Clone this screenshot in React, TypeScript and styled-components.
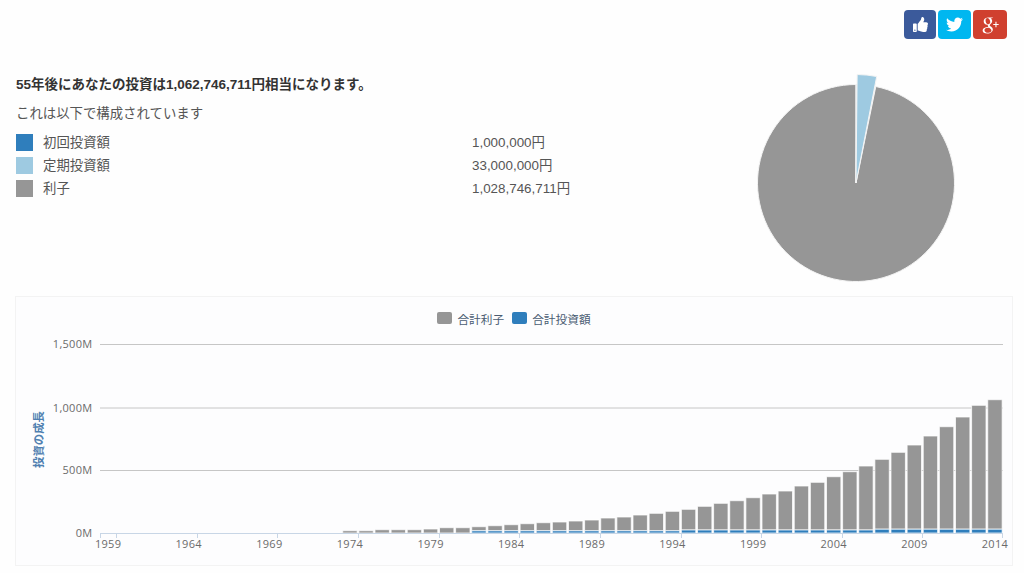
import React from "react";
import styled, { createGlobalStyle } from "styled-components";
import { FaThumbsUp, FaTwitter } from "react-icons/fa";
import { TiSocialGooglePlus } from "react-icons/ti";

const GlobalStyle = createGlobalStyle`
  html, body { margin: 0; padding: 0; background: #fefefe; }
  body { font-family: "Liberation Sans", "Noto Sans CJK JP", sans-serif; color: #555; }
`;

const Page = styled.div`
  width: 1024px;
  height: 573px;
  overflow: hidden;
  box-sizing: border-box;
  padding: 10px 17px 0 15px;
  display: flex;
  flex-direction: column;
`;
const Toolbar = styled.div`
  display: flex;
  justify-content: flex-end;
  gap: 2px;
  height: 29px;
`;
const ShareButton = styled.button<{ $bg: string; $w: number }>`
  width: ${(p) => p.$w}px;
  height: 29px;
  border: 0;
  padding: 0;
  border-radius: 4px;
  background: ${(p) => p.$bg};
  color: #fff;
  display: flex;
  align-items: center;
  justify-content: center;
`;
const Summary = styled.section`
  margin-top: 35px;
  height: 210px;
  display: flex;
  justify-content: space-between;
  padding: 0 51px 0 1px;
`;
const Details = styled.div`
  width: 560px;
  font-size: 13.4px;
`;
const Headline = styled.div`
  font-weight: 700;
  font-size: 13.5px;
  color: #333;
  line-height: 20px;
  padding-top: 1px;
`;
const Subhead = styled.div`
  margin-top: 9px;
  margin-bottom: 7px;
  line-height: 20px;
`;
const BreakdownRow = styled.div`
  display: grid;
  grid-template-columns: 27px 429px 1fr;
  align-items: center;
  height: 23px;
`;
const Swatch = styled.span<{ $c: string }>`
  width: 17px;
  height: 17px;
  background: ${(p) => p.$c};
`;
const RowText = styled.span`
  padding-bottom: 3px;
`;
const ChartCard = styled.section`
  margin-top: 12px;
  width: 998px;
  height: 270px;
  box-sizing: border-box;
  border: 1px solid #f3f3f3;
  background: #fdfdfe;
  display: flex;
  flex-direction: column;
`;
const ChartLegend = styled.div`
  height: 37px;
  padding-top: 14px;
  box-sizing: border-box;
  display: flex;
  justify-content: center;
  font-size: 11.7px;
  color: #4a5c72;
`;
const LegendItem = styled.div`
  display: flex;
  align-items: center;
  gap: 5px;
  height: 14px;
  margin: 0 4px;
`;
const LegendKey = styled.span<{ $c: string }>`
  width: 15px;
  height: 12px;
  border-radius: 2px;
  background: ${(p) => p.$c};
`;
const PlotSvg = styled.svg`
  display: block;
  width: 996px;
  height: 231px;
`;
const AxisText = styled.text`
  font-family: "Open Sans", sans-serif;
  font-size: 11px;
  letter-spacing: 0.3px;
  fill: #6b6b6b;
`;
const AxisTitle = styled.text`
  font-family: "Liberation Sans", "Noto Sans CJK JP", sans-serif;
  font-size: 11.4px;
  font-weight: 700;
  fill: #4f7fb0;
`;

const breakdown = [
  { c: "#2f7ebc", label: "初回投資額", value: "1,000,000円" },
  { c: "#9ecae1", label: "定期投資額", value: "33,000,000円" },
  { c: "#969696", label: "利子", value: "1,028,746,711円" },
];

const tops: Record<number, number> = {
  1974: 530.7, 1975: 530.7, 1976: 529.7, 1977: 529.7, 1978: 529.7, 1979: 529, 1980: 527.7, 1981: 527.7,
  1982: 526.7, 1983: 525.7, 1984: 524.7, 1985: 523.7, 1986: 522.7, 1987: 522, 1988: 521, 1989: 520,
  1990: 518, 1991: 517, 1992: 515, 1993: 513.3, 1994: 511.3, 1995: 509.3, 1996: 506.3, 1997: 503.3,
  1998: 500.7, 1999: 497.7, 2000: 494, 2001: 491, 2002: 486, 2003: 482.3, 2004: 476.7, 2005: 471.7,
  2006: 466, 2007: 459.3, 2008: 452.3, 2009: 445, 2010: 436, 2011: 426.7, 2012: 417, 2013: 405.3, 2014: 399.7,
};
const STEP = 903 / 56;
const BASE = 533;
const blueHeight = (y: number) => (y < 1982 ? 0 : y < 1995 ? 2.2 : y < 2007 ? 3 : 3.8);

const grid = [
  { y: 344.5, label: "1,500M" },
  { y: 408, label: "1,000M" },
  { y: 470.5, label: "500M" },
];
const labelYears = Array.from({ length: 12 }, (_, i) => 1959 + i * 5);

function polar(r: number, deg: number): [number, number] {
  const a = (deg * Math.PI) / 180;
  return [100 + r * Math.sin(a), 109 - r * Math.cos(a)];
}
function wedge(r: number, a: number, b: number) {
  const [x1, y1] = polar(r, a);
  const [x2, y2] = polar(r, b);
  return `M100 109L${x1} ${y1}A${r} ${r} 0 ${b - a > 180 ? 1 : 0} 1 ${x2} ${y2}Z`;
}

export default function App() {
  return (
    <Page>
      <GlobalStyle />
      <Toolbar>
        <ShareButton $bg="#3b5a9b" $w={32}><FaThumbsUp size={15} /></ShareButton>
        <ShareButton $bg="#00b7f0" $w={33}><FaTwitter size={17} /></ShareButton>
        <ShareButton $bg="#d0402f" $w={34}><TiSocialGooglePlus size={26} /></ShareButton>
      </Toolbar>
      <Summary>
        <Details>
          <Headline>55年後にあなたの投資は1,062,746,711円相当になります。</Headline>
          <Subhead>これは以下で構成されています</Subhead>
          {breakdown.map((b) => (
            <BreakdownRow key={b.label}>
              <Swatch $c={b.c} />
              <RowText>{b.label}</RowText>
              <RowText>{b.value}</RowText>
            </BreakdownRow>
          ))}
        </Details>
        <svg width="200" height="210" viewBox="0 0 200 210" aria-label="pie">
          <path d={wedge(98.5, 11.6, 360)} fill="#969696" stroke="#f4f4f4" strokeWidth="1" />
          <path d={wedge(98.5, 0, 0.4)} fill="#2f7ebc" stroke="#f4f4f4" strokeWidth="1" />
          <path d={wedge(108.5, 0.6, 11)} fill="#9ecae1" stroke="#f4f4f4" strokeWidth="1" />
        </svg>
      </Summary>
      <ChartCard>
        <ChartLegend>
          <LegendItem><LegendKey $c="#969696" />合計利子</LegendItem>
          <LegendItem><LegendKey $c="#2f7ebc" />合計投資額</LegendItem>
        </ChartLegend>
        <PlotSvg viewBox="16 334 996 231">
          {grid.map((g) => (
            <g key={g.label}>
              <line x1="100" x2="1003" y1={g.y} y2={g.y} stroke="#c6c6c6" strokeWidth="1" />
              <AxisText x="92.5" y={g.y + 3.5} textAnchor="end">{g.label}</AxisText>
            </g>
          ))}
          <AxisText x="92.5" y="537" textAnchor="end">0M</AxisText>
          <AxisTitle transform="translate(43 439.5) rotate(-90)" textAnchor="middle">投資の成長</AxisTitle>
          {Object.keys(tops).map((k) => {
            const year = Number(k);
            const cx = 100 + (year - 1959 + 0.5) * STEP;
            const blue = blueHeight(year);
            return (
              <g key={k} stroke="#fff" strokeOpacity="0.75" strokeWidth="1">
                <rect x={cx - 7.2} y={tops[year]} width={14.4} height={BASE - tops[year] - blue} fill="#969696" />
                {blue > 0 && <rect x={cx - 7.2} y={BASE - blue} width={14.4} height={blue} fill="#2f7ebc" />}
              </g>
            );
          })}
          <line x1="100" x2="1003" y1="533.5" y2="533.5" stroke="#c8d6e6" strokeWidth="1" />
          <line x1="100.5" x2="100.5" y1="533" y2="538" stroke="#c8d6e6" />
          <line x1="1002.5" x2="1002.5" y1="533" y2="538" stroke="#c8d6e6" />
          {labelYears.map((y) => {
            const i = y - 1959;
            const tick = Math.round(100 + (i + 1) * STEP) + 0.5;
            return (
              <g key={y}>
                {y !== 2014 && <line x1={tick} x2={tick} y1="533" y2="538" stroke="#c8d6e6" />}
                <AxisText x={100 + (i + 0.5) * STEP} y="548" textAnchor="middle">{y}</AxisText>
              </g>
            );
          })}
        </PlotSvg>
      </ChartCard>
    </Page>
  );
}
